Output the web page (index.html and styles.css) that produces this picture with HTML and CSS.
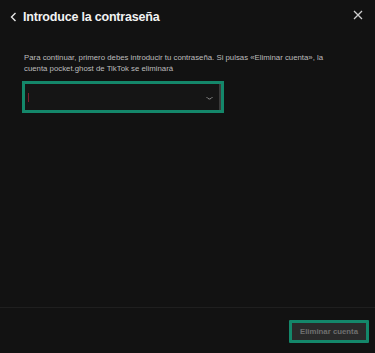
FILE: index.html
```html
<!DOCTYPE html>
<html lang="es">
<head>
  <meta charset="UTF-8"/>
  <meta name="viewport" content="width=device-width, initial-scale=1.0"/>
  <title>Introduce la contraseña</title>
  <link rel="stylesheet" href="styles.css">
</head>
<body>
  <div class="modal">
    <header class="modal-head">
      <button class="icon-btn back" aria-label="Volver">
        <svg width="7" height="10" viewBox="0 0 7 10"><path d="M5.5 1 L1.5 5 L5.5 9" fill="none" stroke="#e6e6e6" stroke-width="1.4"/></svg>
      </button>
      <h1>Introduce la contraseña</h1>
      <button class="icon-btn close" aria-label="Cerrar">
        <svg width="10" height="10" viewBox="0 0 10 10"><path d="M1 1 L9 9 M9 1 L1 9" fill="none" stroke="#cfcfcf" stroke-width="1.3"/></svg>
      </button>
    </header>

    <div class="modal-body">
      <p class="hint">Para continuar, primero debes introducir tu contraseña. Si pulsas «Eliminar cuenta», la cuenta pocket.ghost de TikTok se eliminará</p>

      <div class="pw-field">
        <span class="caret"></span>
        <svg class="eye" width="7" height="5" viewBox="0 0 7 5"><path d="M0.5 1 Q3.5 5 6.5 1" fill="none" stroke="#8a8a8a" stroke-width="1"/></svg>
      </div>
    </div>

    <footer class="modal-foot">
      <button class="danger-btn" disabled>Eliminar cuenta</button>
    </footer>
  </div>
</body>
</html>
```

FILE: styles.css
```css
:root {
  --bg:       #121212;
  --text:     #f2f2f2;
  --muted:    #bdbdbd;
  --green:    #14876a;
  --line:     #1f1f1f;
  --btn-bg:   #2a2a2a;
  --btn-text: #6f6f6f;
}
* { box-sizing: border-box; margin: 0; padding: 0; }
html, body { height: 100%; }
body {
  font-family: "Liberation Sans", Arial, sans-serif;
  background: var(--bg);
  color: var(--text);
}
.modal {
  height: 100%;
  display: flex;
  flex-direction: column;
}
.modal-head {
  display: flex;
  align-items: center;
  height: 34px;
  padding: 0 12px 0 10px;
}
.modal-head h1 {
  flex: 1;
  font-size: 12.5px;
  font-weight: bold;
  letter-spacing: -0.2px;
  margin-left: 6px;
}
.icon-btn {
  background: none;
  border: none;
  display: flex;
  align-items: center;
  cursor: pointer;
}
.close { margin-top: -4px; }

.modal-body {
  flex: 1;
  padding: 18px 24px 0 22px;
}
.hint {
  font-size: 7.8px;
  line-height: 11px;
  color: var(--muted);
  padding-left: 2px;
  max-width: 312px;
}
.pw-field {
  width: 202px;
  height: 32px;
  margin-top: 7px;
  border: 3px solid var(--green);
  background: #151515;
  box-shadow: inset -2px 0 0 #3a3a3a;
  display: flex;
  align-items: center;
  justify-content: space-between;
  padding: 0 8px 0 3px;
}
.caret {
  width: 1px;
  height: 9px;
  background: #7a1f2e;
}
.eye { margin-top: 2px; }

.modal-foot {
  border-top: 1px solid var(--line);
  display: flex;
  justify-content: flex-end;
  padding: 12px 6px 10px;
}
.danger-btn {
  width: 80px;
  height: 23px;
  border: 3px solid var(--green);
  background: var(--btn-bg);
  color: var(--btn-text);
  font-family: inherit;
  font-size: 7.8px;
  font-weight: bold;
  border-radius: 1px;
}
```
